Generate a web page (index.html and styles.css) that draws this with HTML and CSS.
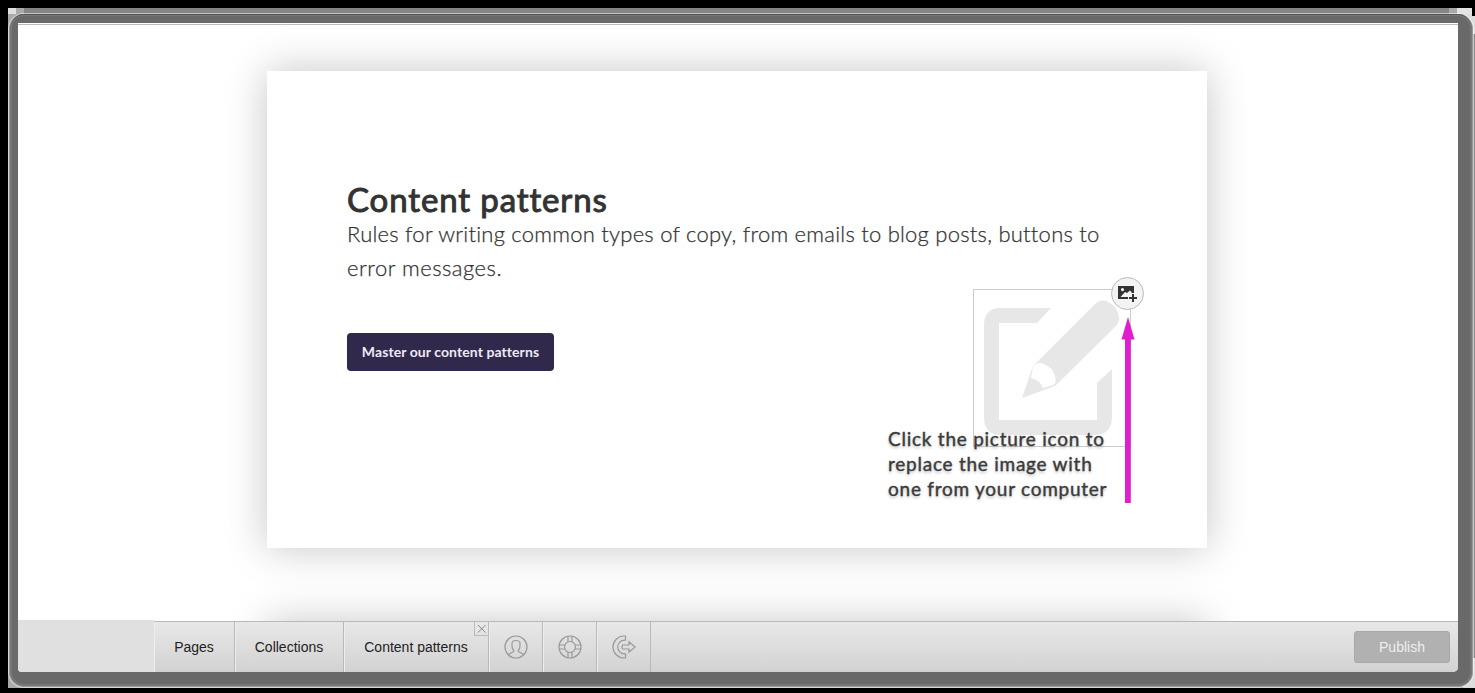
FILE: index.html
```html
<!DOCTYPE html>
<html lang="en">
<head>
<meta charset="utf-8">
<title>Content patterns</title>
<link rel="stylesheet" href="styles.css">
</head>
<body>
<div class="backing">
<div class="frame">
<div class="screen">
  <main class="canvas">
    <section class="card">
      <h1 class="title">Content patterns</h1>
      <p class="lead"><span class="lead-a">Rules for writing common types of copy, from emails to blog posts, buttons to</span><br><span class="lead-b">error messages.</span></p>
      <a class="cta"><span>Master our content patterns</span></a>
      <div class="picture">
        <svg width="158" height="158" viewBox="0 0 158 158">
          <rect x=".5" y=".5" width="157" height="157" fill="none" stroke="#ccc"/>
          <path fill="#e7e7e7" d="M78 19H28Q11 19 11 36V128Q11 146 28 146H121Q139 146 139 128V80L124 94V131H26V34H64Z"/>
          <path fill="#e7e7e7" d="M49 109L60 77L121 16Q128 9 135 13Q144 17 146 28Q147 32 143 37L82 97Z"/>
          <path fill="#fff" d="M60 78Q64 72 71 75Q79 78 82 87Q84 94 80 96L70 99Q67 91 58 89Z"/>
        </svg>
      </div>
      <button class="swap" aria-label="Replace image">
        <svg width="22" height="20" viewBox="0 0 22 20">
          <path fill="#333" fill-rule="evenodd" d="M1 2H17V9H14.500V8L13 6.500L10 9L8 8L3.500 13H11V15H1ZM5.500 4A1.600 1.600 0 1 0 5.500 7.200A1.600 1.600 0 1 0 5.500 4Z"/>
          <path stroke="#333" stroke-width="2" d="M16 10V18M12 14H20"/>
        </svg>
      </button>
      <p class="note"><span class="note-a">Click the picture icon to</span><br><span class="note-b">replace the image with</span><br><span class="note-c">one from your computer</span></p>
      <svg class="arrow" width="14" height="187" viewBox="0 0 14 187"><path fill="#df1fcd" d="M7 0L13.500 22.500H9.800V186H4V22.500H.5Z"/></svg>
    </section>
    <section class="card next"></section>
  </main>
  <nav class="toolbar">
    <div class="brand"></div>
    <a class="tab pages">Pages</a>
    <a class="tab collections">Collections</a>
    <a class="tab current">Content patterns
      <span class="close"><svg width="14" height="14" viewBox="0 0 14 14"><path d="M3 3L10.500 10.500M10.500 3L3 10.500" stroke="#888" stroke-width="1"/></svg></span>
    </a>
    <a class="tool"><svg width="24" height="24" viewBox="0 0 24 24"><circle cx="12" cy="12" r="11"/><path d="M4.200 19.500L9.800 16.500V15.500Q8 14 8 11V8.500Q8 5.500 12 5.500T16 8.500V11Q16 14 14.200 15.500V16.500L19.800 19.500"/></svg></a>
    <a class="tool"><svg width="24" height="24" viewBox="0 0 24 24"><circle cx="12" cy="12" r="11"/><circle cx="12" cy="12" r="5.500"/><path d="M10 1.200V6.900M14 1.200V6.900M10 17.100V22.800M14 17.100V22.800M1.200 10H6.900M1.200 14H6.900M17.100 10H22.800M17.100 14H22.800"/></svg></a>
    <a class="tool"><svg width="24" height="24" viewBox="0 0 24 24"><path d="M13.500 1H12A11 11 0 0 0 12 23H13.500V18.800H12.500A6.800 6.800 0 0 1 12.500 5.200H13.500ZM10.500 10H17V6.800L23 12L17 17.200V14H10.500Q9.500 12 10.500 10Z"/></svg></a>
    <button class="publish">Publish</button>
  </nav>
</div>
</div>
</div>
</body>
</html>
```
FILE: styles.css
```css
* { box-sizing: border-box; }
body {
  margin: 0;
  padding: 8px 0 5px 8px;
  height: 693px;
  overflow: hidden;
  background: #000;
  font-family: "Liberation Sans", Arial, sans-serif;
}
.backing {
  height: 680px;
  padding: 6px 2px 0 1px;
  background:
    linear-gradient(#000, #000) right top / 3px 8px no-repeat,
    linear-gradient(90deg, #e0e0e0 8px, #aaa 8px, #aaa 16px, #858585 16px, #858585 1441px, #aaa 1441px, #aaa 1449px, #e4e4e4 1449px) top / 100% 6px no-repeat,
    linear-gradient(#ddd 26px, #888 26px, #888 650px, #ddd 650px) right / 12px 100% no-repeat,
    #aaa;
}
.frame {
  height: 673px;
  padding: 9px 14px 15px 8px;
  border: 1px solid #999;
  border-width: 0 1px 1px 1px;
  border-radius: 15px;
  background: #696969;
  box-shadow: inset 0 1px #555, inset 0 0 0 2px #777, 0 0 0 1px #fff8;
}
.screen {
  display: flex;
  flex-direction: column;
  height: 649px;
  border-top: 1px solid #fff;
  border-radius: 0 0 5px 4px;
  background: #fff;
  overflow: hidden;
  box-shadow: inset 0 1px #bbb;
}
.canvas {
  flex: 1;
  min-height: 0;
  padding: 47px 251px 0 249px;
  overflow: hidden;
}
.card {
  position: relative;
  height: 477px;
  padding: 108px 80px 0;
  background: #fff;
  box-shadow: 0 0 40px rgba(0, 0, 0, .23);
}
.next { margin-top: 74px; }
.title {
  margin: 0;
  height: 38px;
  font: 400 33px/40px Lato, sans-serif;
  letter-spacing: .88px;
  -webkit-text-stroke: 1px #333;
  white-space: nowrap;
  color: #333;
}
.lead {
  margin: 0;
  font: 300 22px/34px Lato, sans-serif;
  letter-spacing: .5px;
  -webkit-text-stroke: .25px #333;
  white-space: nowrap;
  color: #333;
}
.lead-a { letter-spacing: .24px; }
.cta {
  display: flex;
  align-items: center;
  justify-content: center;
  width: 207px;
  height: 38px;
  margin-top: 48px;
  padding-bottom: 2px;
  border-radius: 4px;
  background: #30294c;
  color: #eeeaf5;
  font: 700 14px Lato, sans-serif;
  letter-spacing: .08px;
  white-space: nowrap;
}
.picture { position: absolute; left: 706px; top: 218px; }
.picture svg { display: block; }
.swap {
  position: absolute;
  left: 844px;
  top: 206px;
  display: flex;
  align-items: center;
  justify-content: center;
  width: 33px;
  height: 33px;
  padding: 0;
  border: 1px solid #bbb;
  border-radius: 50%;
  background: #f3f3f3;
}
.note {
  position: absolute;
  left: 621px;
  top: 355px;
  margin: 0;
  color: #3b3b3b;
  font: 400 19px/25px Lato, sans-serif;
  letter-spacing: .75px;
  -webkit-text-stroke: .4px #3b3b3b;
  white-space: nowrap;
  text-shadow: 0 2px 3px rgba(0, 0, 0, .25);
}
.arrow { position: absolute; left: 854px; top: 246px; }
.toolbar {
  display: flex;
  align-items: stretch;
  height: 51px;
  border-top: 1px solid #b9b9b9;
  background: linear-gradient(#e8e8e8, #d2d2d2);
  font-size: 14px;
  color: #222;
}
.brand { width: 136px; margin-top: -2px; background: #e0e0e0; }
.tab, .tool {
  position: relative;
  display: flex;
  align-items: center;
  justify-content: center;
  border-right: 1px solid #b9b9b9;
  box-shadow: inset 1px 0 #eee;
}
.pages { width: 81px; }
.collections { width: 109px; }
.current { width: 145px; }
.tool { width: 54px; padding-bottom: 1px; }
.tool svg { fill: none; stroke: #999; stroke-width: 1.2; }
.close {
  position: absolute;
  right: 0;
  top: 0;
  width: 14px;
  height: 14px;
  border: solid #bbb;
  border-width: 0 0 1px 1px;
}
.close svg { display: block; }
.publish {
  width: 96px;
  height: 32px;
  margin: 9px 8px 0 auto;
  padding: 0;
  border: 1px solid #a8a8a8;
  border-radius: 3px;
  background: #b1b1b1;
  color: #eee;
  font: 14px "Liberation Sans", Arial, sans-serif;
}
```
